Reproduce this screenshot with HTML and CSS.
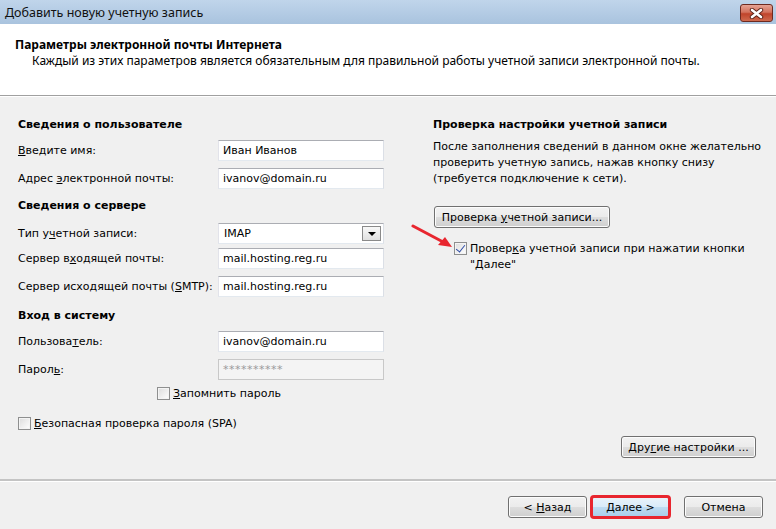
FILE: index.html
```html
<!DOCTYPE html>
<html>
<head>
	<meta charset="UTF-8">
	<title>Добавить новую учетную запись</title>
	<link rel="stylesheet" href="styles.css">
</head>
<body>
	<div id="window">
		<div class="titlebar">
			<span class="caption">Добавить новую учетную запись</span>
			<span class="close">
				<svg width="15" height="11" viewBox="0 0 15 11">
					<path d="M3 2 L12 9 M12 2 L3 9" stroke="#5b2218" stroke-width="4.4" stroke-linecap="round"/>
					<path d="M3 2 L12 9 M12 2 L3 9" stroke="#fff" stroke-width="2.6" stroke-linecap="round"/>
				</svg>
			</span>
		</div>
		<div class="header">
			<div class="h-title">Параметры электронной почты Интернета</div>
			<div class="h-sub">Каждый из этих параметров является обязательным для правильной работы учетной записи электронной почты.</div>
		</div>
		<div class="content">
			<div class="left">
				<div class="group">Сведения о пользователе</div>
				<div class="row first">
					<label><u>В</u>ведите имя:</label>
					<span class="field">Иван Иванов</span>
				</div>
				<div class="row">
					<label>Адрес <u>э</u>лектронной почты:</label>
					<span class="field">ivanov@domain.ru</span>
				</div>
				<div class="group next">Сведения о сервере</div>
				<div class="row after-group">
					<label>Тип у<u>ч</u>етной записи:</label>
					<span class="field combo">IMAP<i class="drop"></i></span>
				</div>
				<div class="row tight">
					<label>Сервер в<u>х</u>одящей почты:</label>
					<span class="field">mail.hosting.reg.ru</span>
				</div>
				<div class="row">
					<label>Сервер исходящей почты (<u>S</u>MTP):</label>
					<span class="field">mail.hosting.reg.ru</span>
				</div>
				<div class="group next wide">Вход в систему</div>
				<div class="row first">
					<label>Пользова<u>т</u>ель:</label>
					<span class="field">ivanov@domain.ru</span>
				</div>
				<div class="row">
					<label>Парол<u>ь</u>:</label>
					<span class="field disabled">**********</span>
				</div>
				<div class="check remember">
					<i class="box"></i><span><u>З</u>апомнить пароль</span>
				</div>
				<div class="check spa">
					<i class="box"></i><span><u>Б</u>езопасная проверка пароля (SPA)</span>
				</div>
			</div>
			<div class="right">
				<div class="group">Проверка настройки учетной записи</div>
				<p class="note">После заполнения сведений в данном окне желательно<br>проверить учетную запись, нажав кнопку снизу<br>(требуется подключение к сети).</p>
				<span class="btn test"><span>Проверка <u>у</u>четной записи...</span></span>
				<div class="check verify">
					<i class="box checked"></i><span>Провер<u>к</u>а учетной записи при нажатии кнопки<br>"Далее"</span>
				</div>
				<span class="btn more"><span>Дру<u>г</u>ие настройки ...</span></span>
			</div>
		</div>
		<div class="footer">
			<span class="btn"><span>&lt; <u>Н</u>азад</span></span>
			<span class="btn default"><span><u>Д</u>алее &gt;</span></span>
			<span class="btn cancel"><span>Отмена</span></span>
		</div>
		<svg class="arrow" width="50" height="30" viewBox="0 0 50 30">
			<path d="M2 2 L34 19" stroke="#e8262f" stroke-width="3" stroke-linecap="round"/>
			<path d="M41 23 L27 21 L34 13 Z" fill="#e8262f"/>
		</svg>
	</div>
</body>
</html>
```

FILE: styles.css
```css
*{margin:0;padding:0;box-sizing:border-box;}
body{
	background:#f0f0f0;
	font-family:"DejaVu Sans",Tahoma,sans-serif;
	font-size:11px;
	color:#000;
}
u{text-decoration:underline;text-underline-offset:1px;}
#window{
	width:776px;
	height:529px;
	position:relative;
	overflow:hidden;
}
.titlebar{
	height:24px;
	display:flex;
	align-items:center;
	justify-content:space-between;
	padding:0 3px 0 5px;
	background:linear-gradient(#c0d5eb,#a9c3de);
}
.caption{
	font-family:"Noto Sans",sans-serif;
	font-size:12.5px;
	color:#111;
}
.close{
	width:33px;
	height:18px;
	margin-top:2px;
	border:1px solid #6d2a20;
	border-radius:3px;
	background:linear-gradient(#e6a394,#d3725d 45%,#c0442b 55%,#cf6a4e);
	display:flex;
	align-items:center;
	justify-content:center;
}
.header{
	height:72px;
	background:#fff;
	border-bottom:1px solid #a0a0a0;
	padding:13px 0 0 15px;
	font-family:"Noto Sans",sans-serif;
	font-size:12px;
	line-height:16px;
}
.h-title{font-weight:bold;}
.h-sub{padding-left:17px;}
.content{
	height:383px;
	border-top:1px solid #fff;
	display:flex;
	padding:18px 20px 21px 18px;
}
.left{
	width:415px;
	flex:none;
}
.right{
	flex:1;
	min-width:0;
	display:flex;
	flex-direction:column;
}
.group{
	font-weight:bold;
	line-height:16px;
	height:18px;
	padding-top:2px;
}
.group.next{margin-top:7px;}
.group.wide{margin-top:9px;}
.row{
	display:flex;
	align-items:center;
	height:21px;
	margin-top:7px;
}
.row.first{margin-top:7px;}
.row.after-group{margin-top:9px;}
.row.tight{margin-top:4px;}
.row label{width:200px;}
.field{
	width:166px;
	height:21px;
	background:#fff;
	border:1px solid;
	border-color:#abadb3 #dbdfe6 #e3e9ef #e2e3ea;
	padding:0 4px;
	line-height:19px;
	position:relative;
}
.field.disabled{
	background:#f4f4f4;
	border-color:#c8c8c8;
	color:#9a9a9a;
	letter-spacing:0.5px;
}
.combo{padding-left:5px;}
.drop{
	position:absolute;
	right:2px;
	top:2px;
	width:19px;
	height:15px;
	border:1px solid #8a8a8a;
	background:linear-gradient(#f8f8f8,#e0e0e0);
}
.drop:after{
	content:"";
	position:absolute;
	left:5px;
	top:5px;
	border-left:4px solid transparent;
	border-right:4px solid transparent;
	border-top:4px solid #000;
}
.check{
	display:flex;
	align-items:flex-start;
	line-height:16px;
}
.box{
	width:13px;
	height:13px;
	flex:none;
	margin:1px 3px 0 0;
	border:1px solid #8e8f8f;
	background:linear-gradient(135deg,#dcdcdc,#fff);
	box-shadow:inset 0 0 0 1px #f4f4f4;
	position:relative;
}
.box.checked:after{
	content:"";
	position:absolute;
	left:3px;
	top:0;
	width:4px;
	height:8px;
	border-right:1.5px solid #2a49a5;
	border-bottom:1.5px solid #2a49a5;
	transform:rotate(38deg);
}
.remember{margin:6px 0 0 139px;}
.spa{margin-top:14px;}
.note{
	margin-top:6px;
	line-height:16px;
	white-space:nowrap;
}
.btn{
	display:inline-flex;
	align-items:center;
	justify-content:center;
	height:22px;
	border:1px solid #707070;
	border-radius:3px;
	background:linear-gradient(#f2f2f2,#ebebeb 50%,#dddddd 51%,#cfcfcf);
	box-shadow:inset 0 0 0 1px #fcfcfc;
	color:#000;
}
.btn.test{
	width:176px;
	margin:19px 0 0 1px;
}
.verify{
	margin:13px 0 0 21px;
	white-space:nowrap;
}
.btn.more{
	width:135px;
	margin-top:auto;
	align-self:flex-end;
}
.footer{
	height:49px;
	border-top:2px solid #c4c4c4;
	box-shadow:inset 0 1px 0 #fff;
	display:flex;
	justify-content:flex-end;
	padding:15px 13px 0 0;
}
.footer .btn{width:79px;}
.footer .btn.default{
	margin-left:4px;
	border-color:#3c7fb1;
	background:linear-gradient(#eaf3fa,#d9ebf9 50%,#bfdbf1 51%,#a7cdea);
	outline:3px solid #e8262f;
	outline-offset:-2px;
}
.footer .btn.cancel{margin-left:14px;}
.arrow{
	position:absolute;
	left:411px;
	top:224px;
}
```
